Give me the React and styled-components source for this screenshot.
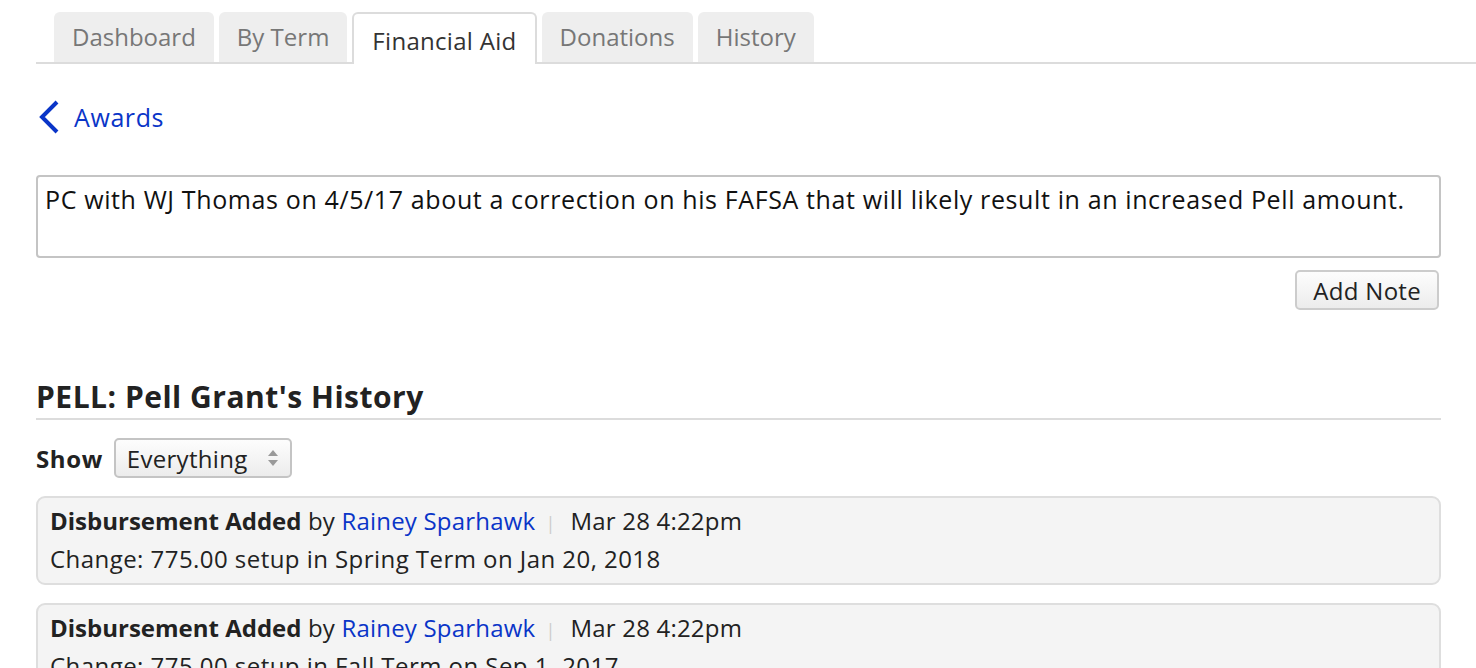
import React from 'react'
import styled, { createGlobalStyle } from 'styled-components'

const GlobalStyle = createGlobalStyle`
  body {
    margin: 0;
    background: #fff;
    font-family: "Open Sans", "Liberation Sans", sans-serif;
    color: #222;
  }
`

const tabs = ['Dashboard', 'By Term', 'Financial Aid', 'Donations', 'History']

const entries = [
  { change: 'Change: 775.00 setup in Spring Term on Jan 20, 2018' },
  { change: 'Change: 775.00 setup in Fall Term on Sep 1, 2017' },
]

const App = () => {
  return (
    <Page>
      <GlobalStyle />
      <TabBar>
        {tabs.map((t) => (
          <Tab key={t} active={t === 'Financial Aid'}>{t}</Tab>
        ))}
      </TabBar>
      <Content>
        <BackLink href="#">
          <svg width="22" height="34" viewBox="0 0 22 34">
            <polyline points="19,2 4,17 19,32" fill="none" stroke="#0a35c8" strokeWidth="4" />
          </svg>
          <span>Awards</span>
        </BackLink>

        <NoteBox defaultValue="PC with WJ Thomas on 4/5/17 about a correction on his FAFSA that will likely result in an increased Pell amount." />
        <ButtonRow>
          <Button>Add Note</Button>
        </ButtonRow>

        <Heading>PELL: Pell Grant's History</Heading>
        <FilterRow>
          <FilterLabel>Show</FilterLabel>
          <SelectWrap>
            <Select defaultValue="Everything">
              <option>Everything</option>
            </Select>
            <SelectArrows width="12" height="18" viewBox="0 0 12 18">
              <polygon points="6,1 11,7 1,7" fill="#999" />
              <polygon points="6,17 11,11 1,11" fill="#999" />
            </SelectArrows>
          </SelectWrap>
        </FilterRow>

        <List>
          {entries.map((e, i) => (
            <Card key={i}>
              <Line tight>
                <strong>Disbursement Added</strong> by <UserLink href="#">Rainey Sparhawk</UserLink>
                <Sep>|</Sep>
                Mar 28 4:22pm
              </Line>
              <Line>{e.change}</Line>
            </Card>
          ))}
        </List>
      </Content>
    </Page>
  )
}

export default App

const Page = styled.div`
  padding: 12px 0 0 36px;
`

const TabBar = styled.div`
  display: flex;
  gap: 5px;
  padding-left: 18px;
  border-bottom: 2px solid #dcdcdc;
  height: 50px;
  align-items: flex-end;
`

const Tab = styled.div`
  box-sizing: border-box;
  display: flex;
  align-items: center;
  font-size: 24px;
  padding: ${(p) => (p.active ? '2px 18px 0' : '0 18px 2px')};
  letter-spacing: ${(p) => (p.active ? '0.3px' : '0')};
  color: ${(p) => (p.active ? '#333' : '#777')};
  background: ${(p) => (p.active ? '#fff' : '#eee')};
  border: ${(p) => (p.active ? '2px solid #dcdcdc' : 'none')};
  border-bottom: none;
  border-radius: 6px 6px 0 0;
  margin-bottom: ${(p) => (p.active ? '-2px' : '0')};
  height: ${(p) => (p.active ? '52px' : '50px')};
`

const Content = styled.div`
  width: 1405px;
`

const BackLink = styled.a`
  display: flex;
  align-items: center;
  gap: 14px;
  margin: 36px 0 0 2px;
  height: 34px;
  color: #0a35c8;
  font-size: 25px;
  letter-spacing: 0.6px;
  text-decoration: none;
`

const NoteBox = styled.textarea`
  display: block;
  margin-top: 41px;
  width: 100%;
  height: 83px;
  box-sizing: border-box;
  border: 2px solid #c4c4c4;
  border-radius: 4px;
  padding: 6px 7px;
  font-family: inherit;
  font-size: 25px;
  letter-spacing: 0.62px;
  line-height: 32px;
  color: #111;
  resize: none;
  outline: none;
`

const ButtonRow = styled.div`
  display: flex;
  justify-content: flex-end;
  margin-top: 12px;
  padding-right: 2px;
`

const Button = styled.button`
  height: 40px;
  padding: 0 16px;
  border: 2px solid #ccc;
  border-radius: 5px;
  background: linear-gradient(#fdfdfd, #ececec);
  font-family: inherit;
  font-size: 24px;
  letter-spacing: 0.3px;
  color: #222;
`

const Heading = styled.h2`
  margin: 68px 0 0;
  padding-bottom: 2px;
  font-size: 30px;
  font-weight: 700;
  letter-spacing: 0.5px;
  border-bottom: 2px solid #dcdcdc;
  line-height: 38px;
`

const FilterRow = styled.div`
  display: flex;
  align-items: center;
  gap: 11px;
  margin-top: 18px;
`

const FilterLabel = styled.span`
  font-size: 24px;
  font-weight: 700;
  letter-spacing: 0.6px;
`

const SelectWrap = styled.span`
  position: relative;
  display: inline-block;
`

const Select = styled.select`
  appearance: none;
  width: 178px;
  height: 40px;
  border: 2px solid #c4c4c4;
  border-radius: 5px;
  background: linear-gradient(#fdfdfd, #ececec);
  padding: 0 11px;
  font-family: inherit;
  font-size: 24px;
  letter-spacing: 0.3px;
  color: #222;
`

const SelectArrows = styled.svg`
  position: absolute;
  right: 13px;
  top: 11px;
  pointer-events: none;
`

const List = styled.div`
  display: flex;
  flex-direction: column;
  gap: 18px;
  margin-top: 18px;
`

const Card = styled.div`
  background: #f4f4f4;
  border: 2px solid #dedede;
  border-radius: 9px;
  padding: 5px 12px 6px;
`

const Line = styled.div`
  font-size: 24px;
  line-height: 36px;
  letter-spacing: ${(p) => (p.tight ? '0.2px' : '0.45px')};
  color: #222;
  strong {
    font-weight: 700;
    letter-spacing: 0;
  }
`

const UserLink = styled.a`
  color: #0a35c8;
  text-decoration: none;
`

const Sep = styled.span`
  color: #ccc;
  margin: 0 15px 0 10px;
  font-size: 18px;
`
